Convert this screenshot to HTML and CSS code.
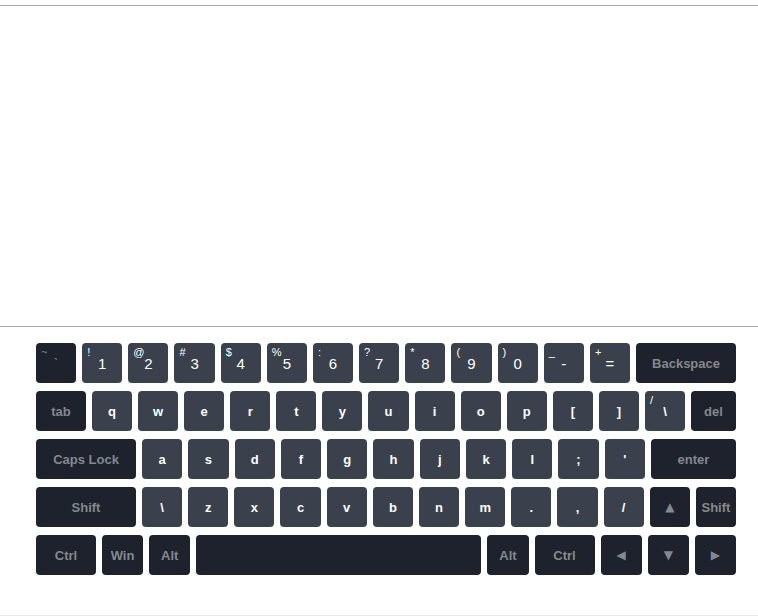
FILE: index.html
```html
<!DOCTYPE html>
<html>
<head>
<meta charset="utf-8">
<link rel="stylesheet" href="styles.css">
</head>
<body>
<div class="display"></div>
<div class="keyboard">
  <div class="row">
    <div class="key dark num"><span class="sym">~</span><span class="main">`</span></div>
    <div class="key num"><span class="sym">!</span><span class="main">1</span></div>
    <div class="key num"><span class="sym">@</span><span class="main">2</span></div>
    <div class="key num"><span class="sym">#</span><span class="main">3</span></div>
    <div class="key num"><span class="sym">$</span><span class="main">4</span></div>
    <div class="key num"><span class="sym">%</span><span class="main">5</span></div>
    <div class="key num"><span class="sym">:</span><span class="main">6</span></div>
    <div class="key num"><span class="sym">?</span><span class="main">7</span></div>
    <div class="key num"><span class="sym">*</span><span class="main">8</span></div>
    <div class="key num"><span class="sym">(</span><span class="main">9</span></div>
    <div class="key num"><span class="sym">)</span><span class="main">0</span></div>
    <div class="key num"><span class="sym">_</span><span class="main">-</span></div>
    <div class="key num"><span class="sym">+</span><span class="main">=</span></div>
    <div class="key dark w100">Backspace</div>
  </div>
  <div class="row">
    <div class="key dark w50">tab</div>
    <div class="key">q</div>
    <div class="key">w</div>
    <div class="key">e</div>
    <div class="key">r</div>
    <div class="key">t</div>
    <div class="key">y</div>
    <div class="key">u</div>
    <div class="key">i</div>
    <div class="key">o</div>
    <div class="key">p</div>
    <div class="key">[</div>
    <div class="key">]</div>
    <div class="key num"><span class="sym">/</span><span class="main small">\</span></div>
    <div class="key dark w45">del</div>
  </div>
  <div class="row">
    <div class="key dark w100">Caps Lock</div>
    <div class="key">a</div>
    <div class="key">s</div>
    <div class="key">d</div>
    <div class="key">f</div>
    <div class="key">g</div>
    <div class="key">h</div>
    <div class="key">j</div>
    <div class="key">k</div>
    <div class="key">l</div>
    <div class="key">;</div>
    <div class="key">'</div>
    <div class="key dark w85">enter</div>
  </div>
  <div class="row">
    <div class="key dark w100">Shift</div>
    <div class="key">\</div>
    <div class="key">z</div>
    <div class="key">x</div>
    <div class="key">c</div>
    <div class="key">v</div>
    <div class="key">b</div>
    <div class="key">n</div>
    <div class="key">m</div>
    <div class="key">.</div>
    <div class="key">,</div>
    <div class="key">/</div>
    <div class="key dark arrow">&#9650;</div>
    <div class="key dark">Shift</div>
  </div>
  <div class="row">
    <div class="key dark w60">Ctrl</div>
    <div class="key dark">Win</div>
    <div class="key dark">Alt</div>
    <div class="key dark space"></div>
    <div class="key dark">Alt</div>
    <div class="key dark w60">Ctrl</div>
    <div class="key dark arrow">&#9664;</div>
    <div class="key dark arrow">&#9660;</div>
    <div class="key dark arrow">&#9654;</div>
  </div>
</div>
</body>
</html>
```
FILE: styles.css
```css
html, body {
  margin: 0;
  padding: 0;
  background: #fff;
  font-family: "Liberation Sans", Arial, sans-serif;
}
.display {
  margin-top: 5px;
  height: 320px;
  border-top: 1px solid #a9a9a9;
  border-bottom: 1px solid #a9a9a9;
}
.keyboard {
  display: flex;
  flex-direction: column;
  gap: 8px;
  padding: 16px 0 40px 36px;
  border-bottom: 1px solid #ececec;
}
.row {
  display: flex;
  gap: 6px;
  width: 700px;
}
.key {
  position: relative;
  flex: 1 1 0;
  height: 40px;
  border-radius: 4px;
  background: #3a414c;
  color: #fff;
  font-size: 13px;
  font-weight: bold;
  display: flex;
  align-items: center;
  justify-content: center;
}
.key.dark {
  background: #1d222c;
  color: #85888d;
}
.key.num {
  font-weight: normal;
}
.sym {
  position: absolute;
  top: 3px;
  left: 5px;
  font-size: 11px;
}
.main {
  font-size: 15px;
  margin-top: 0;
}
.main.small {
  font-size: 13px;
  font-weight: bold;
}
.arrow {
  font-size: 12px;
  font-family: "DejaVu Sans", sans-serif;
}
.w100 { flex: 0 0 100px; }
.w85 { flex: 0 0 85px; }
.w60 { flex: 0 0 60px; }
.w50 { flex: 0 0 50px; }
.w45 { flex: 0 0 45px; }
.space { flex: 0 0 285px; }
```
